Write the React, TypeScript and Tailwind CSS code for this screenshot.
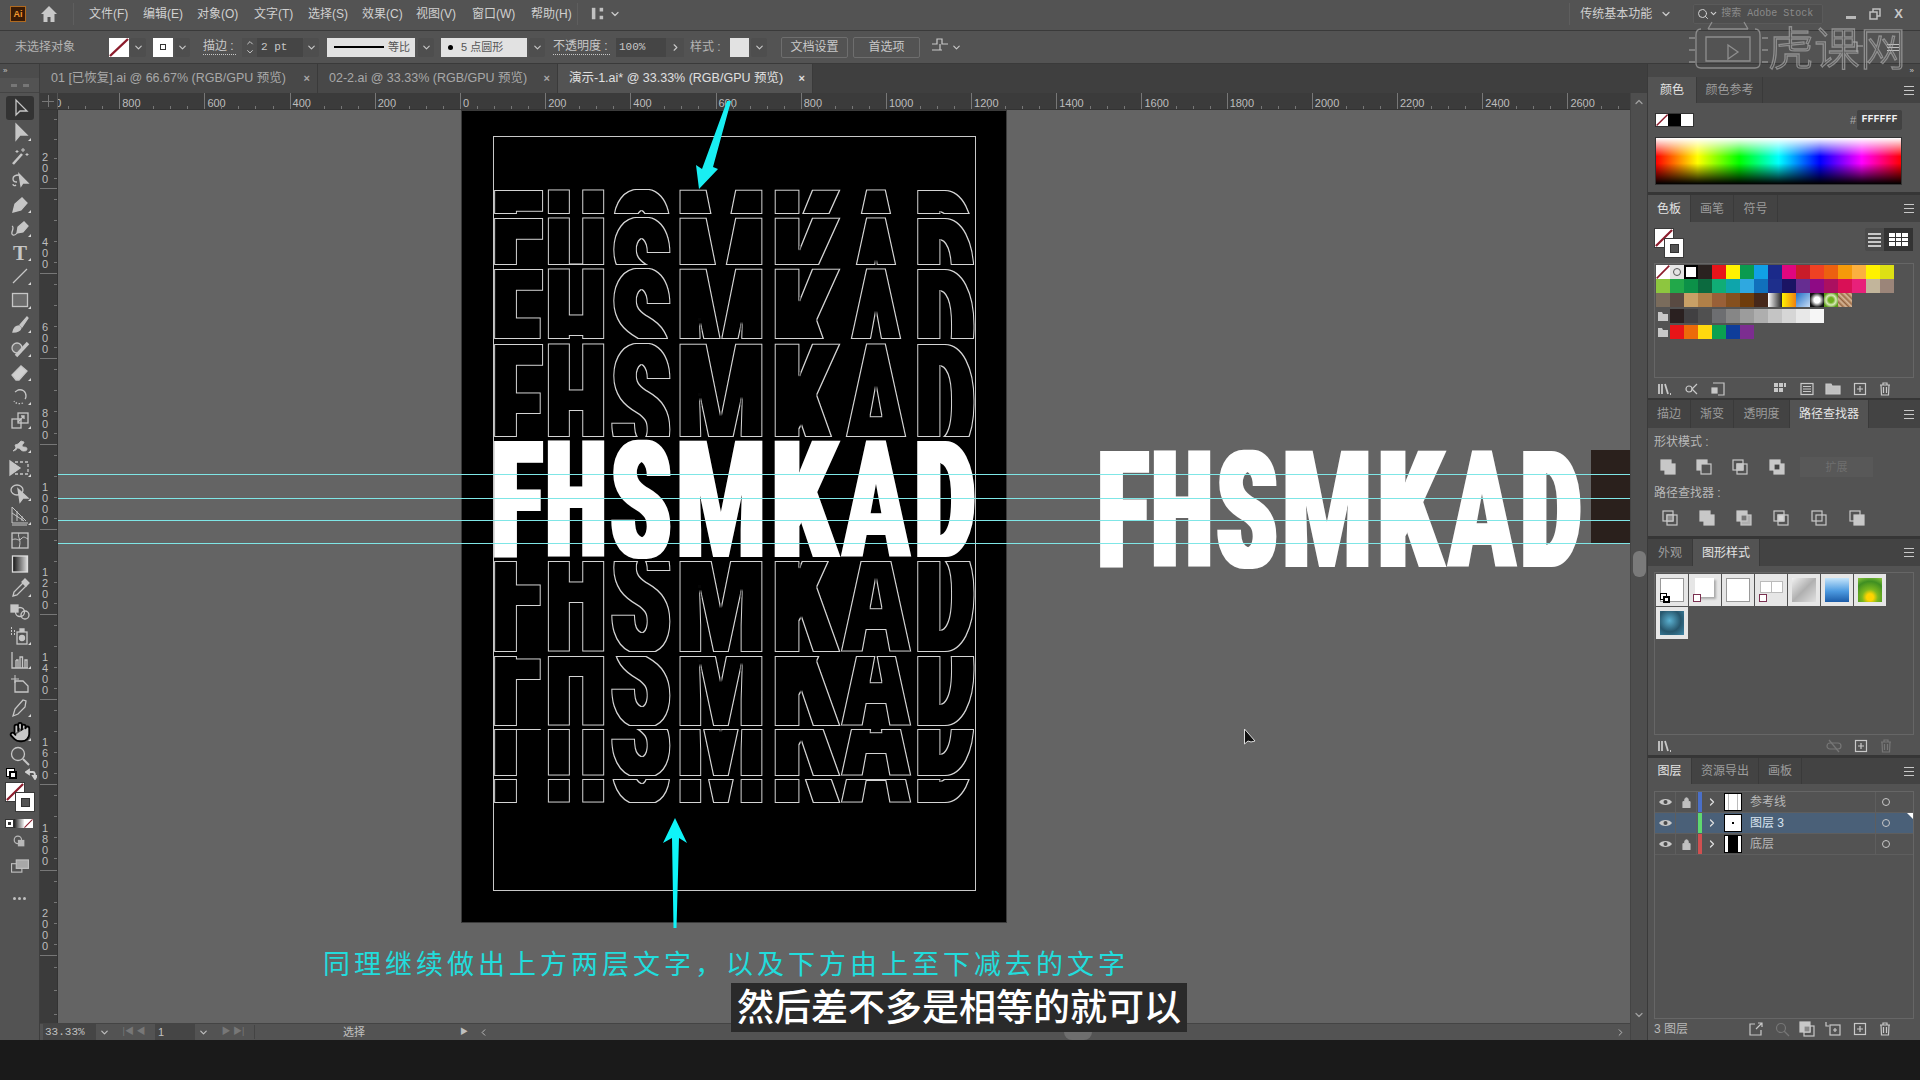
import React from 'react';
import { ChevronDown, ChevronUp, ChevronRight, ChevronLeft, Hand, Search, LayoutPanelLeft } from 'lucide-react';

// tiny helpers
const Chev = ({ className = '' }: { className?: string }) => (
  <div className={`h-[19px] flex items-center justify-center bg-[#4e4e4e] rounded-[2px] ${className}`}>
    <ChevronDown size={11} strokeWidth={2.5} className="text-[#c8c8c8]" />
  </div>
);

const Diagonal = () => (
  <svg viewBox="0 0 20 20" className="absolute inset-0 w-full h-full" preserveAspectRatio="none">
    <line x1="1" y1="19" x2="19" y2="1" stroke="#8c1c2c" strokeWidth="2.4" />
  </svg>
);

// big fill / stroke pair, used by the toolbar and the swatches panel
const FillStroke = ({ className = '' }: { className?: string }) => (
  <div className={`relative w-[30px] h-[30px] ${className}`}>
    <div className="absolute left-0 top-0 w-[20px] h-[20px] bg-white border border-[#3a3a3a]">
      <Diagonal />
    </div>
    <div className="absolute left-[10px] top-[10px] w-[20px] h-[20px] bg-white border border-[#3a3a3a] flex items-center justify-center">
      <div className="w-[9px] h-[9px] bg-[#535353] border border-[#333]" />
    </div>
  </div>
);

const Marker = () => <polygon points="20,21 23,21 23,18" fill="#d8d8d8" stroke="none" />;

const tools: { el: React.ReactNode; mark?: boolean; active?: boolean }[] = [
  { active: true, el: <path d="M8 4v15l4-4h7z" fill="none" /> },
  { mark: true, el: <path d="M8 4v16l4-5h7z" fill="#c6c6c6" /> },
  { mark: false, el: <><path d="M5 20l9-10" strokeWidth="2.6" /><path d="M15 4v4M13 6h4M19 9v3M17.500 10.500h3M9 6v3M7.500 7.500h3" strokeWidth="1" /></> },
  { el: <><path d="M11 7c-4 0-6 2-6 4 0 2 2 3 4 3M5 16c0 2 2 2 3 1" fill="none" /><path d="M11 6l9 9-5 0-2 3z" fill="#c6c6c6" /></> },
  { mark: true, el: <path d="M5 20l2-8 7-6 5 5-6 7z" fill="#c6c6c6" /> },
  { mark: true, el: <><path d="M9 17l1-6 6-5 4 4-5 6z" fill="#c6c6c6" /><path d="M9 17c-2 3-6 3-5-1 1-3 2-5 0-6" fill="none" /></> },
  { mark: true, el: <text x="12" y="20" textAnchor="middle" fontSize="21" fontWeight="700" fontFamily="'Liberation Serif', serif" fill="#c6c6c6" stroke="none">T</text> },
  { mark: true, el: <path d="M5 19L19 5" /> },
  { mark: true, el: <rect x="4.500" y="5.500" width="15" height="13" fill="#6c6c6c" /> },
  { mark: true, el: <><path d="M12 13l7-8 1 1-6 9z" fill="#c6c6c6" /><path d="M5 20c1-4 3-6 6-6l2 2c-1 3-4 4-8 4z" fill="#c6c6c6" /></> },
  { mark: true, el: <><circle cx="9" cy="12" r="5" fill="#6c6c6c" /><path d="M8 20L20 7" strokeWidth="3.4" /></> },
  { mark: true, el: <path d="M4 15l9-9 6 5-8 9H8z" fill="#d0d0d0" /> },
  { mark: true, el: <><path d="M7 8l3-2c4-1 8 1 8 6 0 1 0 2-1 3" fill="none" /><path d="M15 19c-3 1-7 1-9-2" strokeDasharray="1.500 1.500" fill="none" /></> },
  { mark: true, el: <><rect x="4" y="11" width="9" height="9" fill="none" /><rect x="10" y="5" width="10" height="10" fill="none" /><path d="M10 14l6-6M13 8h3v3" /></> },
  { mark: true, el: <path d="M5 19c5-1 3-3 5-3s3 3 5 3 4 0 4-2c0-3-4-1-5-3 0-2 2-2 2-4l-3-1-3 3-3 1 1 3z" fill="#c6c6c6" strokeWidth="0.800" /> },
  { mark: true, el: <><path d="M2 5l10 7-10 7z" fill="#c6c6c6" /><rect x="7" y="6" width="13" height="12" fill="none" strokeDasharray="3 2" /></> },
  { mark: true, el: <><ellipse cx="9" cy="10" rx="6" ry="5" fill="none" /><path d="M10 9l10 9h-5l-3 4z" fill="#c6c6c6" /></> },
  { mark: true, el: <><path d="M4 3v16h16M4 3l14 14M4 9l12 8M9 7v10M14 12v5" fill="none" strokeWidth="1" /><path d="M4 21h15" strokeWidth="1" /></> },
  { el: <><rect x="4" y="5" width="16" height="15" fill="none" /><path d="M4 12c5-3 6 2 9-1s3-2 7 0M11 5c-2 5 3 6 0 15" fill="none" strokeWidth="1" /></> },
  { el: <><defs><linearGradient id="toolGrad"><stop offset="0" stopColor="#111" /><stop offset="1" stopColor="#ddd" /></linearGradient></defs><rect x="4.500" y="4" width="15" height="16" fill="url(#toolGrad)" stroke="#ddd" /></> },
  { mark: true, el: <><path d="M5 20l1-4 9-9 3 3-9 9z" fill="none" /><path d="M14 6l3-3 4 4-3 3z" fill="#c6c6c6" /></> },
  { el: <><rect x="3" y="5" width="7" height="7" fill="#c6c6c6" /><circle cx="12" cy="12" r="4.500" fill="none" /><circle cx="17" cy="15" r="4" fill="none" /></> },
  { mark: true, el: <><rect x="9" y="8" width="10" height="12" fill="none" /><circle cx="14" cy="14" r="2.500" fill="#c6c6c6" /><path d="M12 8V5h4v3" fill="#c6c6c6" /><path d="M3 7h1M6 7h1M3 10h1M6 10h1M3 4h1" strokeWidth="1.800" /></> },
  { mark: true, el: <path d="M4 4v16h16M8 20v-8M8 12h2v8M12 20V9h2.500v11M17 20v-8h2v8" fill="none" /> },
  { el: <><path d="M7 3v8M3 7h8" strokeWidth="1" /><path d="M7 9h8l5 5v6H7z" fill="none" /></> },
  { mark: true, el: <path d="M5 20l2-7 8-9 3 1-1 6-7 7z" fill="none" /> },
  { mark: true, el: <g transform="translate(1 1) scale(0.92)"><Hand size={24} x={0} y={0} fill="#c6c6c6" /></g> },
  { el: <><circle cx="10" cy="10" r="6.500" fill="none" /><path d="M15 15l6 6" strokeWidth="2" /></> },
];

const Toolbar = () => (
  <div className="w-[40px] shrink-0 bg-[#535353] border-r border-[#3e3e3e] flex flex-col">
    <div className="h-[14px] pl-[3px] text-[#c8c8c8] text-[8px] leading-[14px] bg-[#4c4c4c]">»</div>
    <div className="h-[15px] flex items-center justify-center border-b border-[#444]">
      <div className="w-[18px] h-[3px] border-x-[6px] border-[#777]" />
    </div>
    <div className="flex flex-col items-center pt-[3px]">
      {tools.map((t, i) => (
        <div key={i} className={`w-[28px] h-[24px] flex items-center justify-center rounded-[3px] ${t.active ? 'bg-[#333333]' : ''}`}>
          <svg viewBox="0 0 24 24" width="24" height="24" stroke="#c6c6c6" strokeWidth="1.300" fill="none">
            {t.el}
            {t.mark && <Marker />}
          </svg>
        </div>
      ))}
    </div>
    <div className="relative h-[70px] pt-[4px]">
      <div className="absolute left-[6px] top-[0px] w-[9px] h-[9px] bg-white border border-black" />
      <div className="absolute left-[9px] top-[3px] w-[8px] h-[8px] bg-white border-[2px] border-black" />
      <svg viewBox="0 0 12 12" className="absolute left-[25px] top-[0px] w-[12px] h-[12px]" stroke="#d0d0d0" strokeWidth="1.800" fill="none">
        <path d="M2 4h6c2 0 2 2 2 6M1 4l3-2v4zM10 11l-2-3h4z" />
      </svg>
    </div>
    <div className="pl-[5px] -mt-[56px]">
      <FillStroke />
      <div className="flex mt-[7px] h-[9px] w-[29px]">
        <div className="w-[9px] bg-white border border-[#333] flex items-center justify-center"><div className="w-[3px] h-[3px] bg-[#333]" /></div>
        <div className="w-[10px] bg-[linear-gradient(to_right,#222,#eee)]" />
        <div className="relative w-[9px] bg-white"><Diagonal /></div>
      </div>
      <svg viewBox="0 0 16 16" className="w-[13px] h-[13px] mt-[7px] ml-[8px]" fill="#b8b8b8">
        <circle cx="6" cy="6" r="4.500" fill="none" stroke="#b8b8b8" strokeWidth="1.500" />
        <rect x="6" y="6" width="8" height="8" />
      </svg>
      <svg viewBox="0 0 20 16" className="w-[20px] h-[15px] mt-[11px] ml-[5px]" fill="none" stroke="#c0c0c0" strokeWidth="1.200">
        <rect x="1" y="5" width="11" height="9" />
        <rect x="6" y="1" width="13" height="9" fill="#a8a8a8" />
      </svg>
      <div className="mt-[23px] ml-[8px] flex gap-[2px]">
        <div className="w-[3px] h-[3px] rounded-full bg-[#c0c0c0]" />
        <div className="w-[3px] h-[3px] rounded-full bg-[#c0c0c0]" />
        <div className="w-[3px] h-[3px] rounded-full bg-[#c0c0c0]" />
      </div>
    </div>
  </div>
);

const TitleBar = () => {
  const menus = [
    ['文件(F)', 'w-[54px]'], ['编辑(E)', 'w-[54px]'], ['对象(O)', 'w-[57px]'], ['文字(T)', 'w-[54px]'], ['选择(S)', 'w-[54px]'],
    ['效果(C)', 'w-[54px]'], ['视图(V)', 'w-[56px]'], ['窗口(W)', 'w-[59px]'], ['帮助(H)', 'w-[46px]'],
  ];
  return (
    <div className="h-[31px] shrink-0 flex items-center bg-[#535353] border-b border-[#3a3a3a] pb-[3px] text-[12px] text-[#d0d0d0]">
      <div className="ml-[10px] w-[16px] h-[16px] bg-[#3a1b05] border border-[#b06a20] text-[#f09a30] text-[9px] leading-[14px] text-center font-bold">Ai</div>
      <svg viewBox="0 0 18 18" className="ml-[14px] w-[18px] h-[18px]" fill="#c8c8c8"><path d="M9 1L1 9h2.500v8h4v-5h3v5h4V9H17z" /></svg>
      <div className="ml-[15px] mr-[15px] w-px h-[22px] bg-[#5e5e5e]" />
      {menus.map(([m, w]) => <div key={m} className={w}>{m}</div>)}
      <div className="w-px h-[22px] bg-[#5e5e5e]" />
      <LayoutPanelLeft size={17} fill="#c0c0c0" className="ml-[11px] text-[#535353]" />
      <ChevronDown size={12} strokeWidth={2.5} className="ml-[3px] text-[#c8c8c8]" />
      <div className="ml-auto w-px h-[22px] bg-[#5e5e5e]" />
      <div className="ml-[10px] w-[80px]">传统基本功能</div>
      <ChevronDown size={12} strokeWidth={2.5} className="text-[#c8c8c8]" />
      <div className="ml-[21px] w-[130px] h-[20px] flex items-center bg-[#4e4e4e] border border-[#5a5a5a] rounded-[2px] pl-[3px] text-[10px] text-[#8a8a8a] font-['Liberation_Mono','Noto_Sans_CJK_SC',monospace]">
        <Search size={12} className="text-[#d0d0d0]" />
        <ChevronDown size={9} strokeWidth={3} className="text-[#d0d0d0] mr-[3px]" />
        搜索 Adobe Stock
      </div>
      <div className="ml-[23px] w-[10px] h-[3px] mt-[7px] bg-[#b8b8b8]" />
      <svg viewBox="0 0 12 12" className="ml-[13px] w-[12px] h-[12px]" fill="none" stroke="#c0c0c0" strokeWidth="1.500"><rect x="1" y="4" width="7" height="7" /><path d="M4 4V1h7v7H8" /></svg>
      <div className="ml-[13px] mr-[17px] text-[13px] font-bold text-[#c8c8c8] leading-none">X</div>
    </div>
  );
};

const ControlBar = () => (
  <div className="h-[33px] shrink-0 flex items-center bg-[#535353] border-b border-[#3a3a3a] text-[12px] text-[#c8c8c8]">
    <div className="ml-[15px] w-[94px] text-[#b4b4b4]">未选择对象</div>
    <div className="relative w-[20px] h-[19px] bg-white"><Diagonal /></div>
    <Chev className="ml-[1px] w-[16px]" />
    <div className="ml-[7px] w-[20px] h-[19px] bg-white flex items-center justify-center"><div className="w-[6px] h-[6px] border border-[#333]" /></div>
    <Chev className="ml-[2px] w-[15px]" />
    <div className="ml-[13px] w-[33px] leading-[15px] border-b border-dotted border-[#c8c8c8]">描边 :</div>
    <div className="ml-[6px] w-[15px] h-[19px] flex flex-col items-center justify-center bg-[#4e4e4e]">
      <ChevronUp size={10} strokeWidth={2.5} />
      <ChevronDown size={10} strokeWidth={2.5} />
    </div>
    <div className="w-[46px] h-[19px] leading-[19px] pl-[4px] bg-[#454545] text-[11px] font-['Liberation_Mono',monospace]">2 pt</div>
    <Chev className="w-[16px]" />
    <div className="ml-[8px] w-[88px] h-[19px] flex items-center bg-[#e2e2e2] text-[#555] text-[11px]">
      <div className="ml-[7px] w-[50px] h-[2px] bg-black" />
      <div className="ml-[4px]">等比</div>
    </div>
    <Chev className="ml-[3px] w-[16px]" />
    <div className="ml-[7px] w-[86px] h-[19px] flex items-center bg-[#e2e2e2] text-[#555] text-[11px]">
      <div className="ml-[7px] w-[5px] h-[5px] rounded-full bg-black" />
      <div className="ml-[8px]">5 点圆形</div>
    </div>
    <Chev className="ml-[2px] w-[16px]" />
    <div className="ml-[8px] w-[57px] leading-[15px] border-b border-dotted border-[#c8c8c8]">不透明度 :</div>
    <div className="ml-[6px] w-[50px] h-[19px] leading-[19px] pl-[3px] bg-[#454545] text-[11px] font-['Liberation_Mono',monospace]">100%</div>
    <div className="w-[18px] h-[19px] flex items-center justify-center bg-[#4e4e4e]"><ChevronRight size={11} strokeWidth={2.5} /></div>
    <div className="ml-[6px] w-[33px] text-[#b4b4b4]">样式 :</div>
    <div className="ml-[7px] w-[19px] h-[19px] bg-[#e2e2e2]" />
    <Chev className="ml-[2px] w-[16px]" />
    <div className="ml-[14px] w-[67px] h-[21px] leading-[19px] text-center border border-[#6e6e6e] rounded-[2px]">文档设置</div>
    <div className="ml-[5px] w-[67px] h-[21px] leading-[19px] text-center border border-[#6e6e6e] rounded-[2px]">首选项</div>
    <svg viewBox="0 0 18 18" className="ml-[11px] w-[18px] h-[18px]" fill="none" stroke="#c8c8c8" strokeWidth="1.200"><path d="M1 6h5V1h5v5h6M9 6v6M1 12h10" /></svg>
    <ChevronDown size={11} strokeWidth={2.5} className="ml-[2px]" />
    <svg viewBox="0 0 14 14" className="ml-[889px] w-[14px] h-[14px]" fill="none" stroke="#b0b0b0" strokeWidth="1.200"><path d="M2 2h4v10M6 6h6" /></svg>
    <div className="ml-[22px] flex flex-col gap-[2px]">
      <div className="w-[12px] h-px bg-[#c0c0c0]" /><div className="w-[12px] h-px bg-[#c0c0c0]" /><div className="w-[12px] h-px bg-[#c0c0c0]" />
    </div>
  </div>
);

const DocTabs = () => {
  const docs = [
    { name: '01 [已恢复].ai @ 66.67% (RGB/GPU 预览)', w: 'w-[278px]' },
    { name: '02-2.ai @ 33.33% (RGB/GPU 预览)', w: 'w-[240px]' },
    { name: '演示-1.ai* @ 33.33% (RGB/GPU 预览)', w: 'w-[255px]', on: true },
  ];
  return (
    <div className="h-[29px] shrink-0 flex bg-[#3f3f3f] text-[12.5px]">
      {docs.map(d => (
        <div key={d.name} className={`${d.w} flex items-center justify-between pl-[11px] pr-[7px] border-r border-[#3a3a3a] ${d.on ? 'bg-[#535353] text-[#e0e0e0]' : 'bg-[#484848] text-[#a8a8a8]'}`}>
          <span>{d.name}</span>
          <span className="text-[11px] font-bold">×</span>
        </div>
      ))}
    </div>
  );
};

const hLabels = [1000, 800, 600, 400, 200, 0, 200, 400, 600, 800, 1000, 1200, 1400, 1600, 1800, 2000, 2200, 2400, 2600];
const vLabels = ['200', '400', '600', '800', '1000', '1200', '1400', '1600', '1800', '2000'];

const HRuler = () => (
  <div className="h-[17px] shrink-0 flex bg-[#3b3b3b] border-b border-[#333] text-[11px] text-[#bdbdbd]">
    <div className="w-[18px] shrink-0 relative border-r border-[#555]">
      <div className="absolute left-[2px] top-[8px] w-[12px] h-px bg-[#777]" />
      <div className="absolute left-[8px] top-[2px] w-px h-[12px] bg-[#777]" />
    </div>
    <div className="flex-1 overflow-hidden flex">
      <div className="flex -ml-[24px] shrink-0">
        {hLabels.map((l, i) => (
          <div key={i} className="relative w-[85.2px] h-[16px] border-l border-[#777] shrink-0">
            <span className="pl-[2px] leading-[20px] block">{l}</span>
            <div className="absolute bottom-0 left-0 right-0 flex justify-around px-[8px]">
              {[0, 1, 2, 3].map(k => <div key={k} className="w-px h-[3px] bg-[#777]" />)}
            </div>
          </div>
        ))}
      </div>
    </div>
  </div>
);

const VRuler = () => (
  <div className="w-[18px] shrink-0 bg-[#3b3b3b] border-r border-[#333] overflow-hidden text-[11px] leading-[11px] text-[#bdbdbd]">
    {vLabels.map((l, i) => (
      <div key={l} className={`relative border-b border-[#777] flex flex-col justify-end pb-[3px] pl-[2px] ${i === 0 ? 'h-[79px]' : 'h-[85.2px]'}`}>
        {l.split('').map((c, k) => <span key={k}>{c}</span>)}
        <div className="absolute right-0 top-0 bottom-0 flex flex-col justify-around">
          {[0, 1, 2, 3].map(k => <div key={k} className="w-[3px] h-px bg-[#777]" />)}
        </div>
      </div>
    ))}
    <div className="h-[70px] relative flex flex-col justify-around items-end">
      {[0, 1, 2].map(k => <div key={k} className="w-[3px] h-px bg-[#777]" />)}
    </div>
  </div>
);

const StatusBar = () => (
  <div className="h-[17px] shrink-0 flex items-center bg-[#535353] border-t border-[#444] text-[11px] text-[#c0c0c0]">
    <div className="ml-[3px] w-[53px] h-[16px] leading-[16px] pl-[2px] bg-[#454545] font-['Liberation_Mono',monospace]">33.33%</div>
    <div className="w-[17px] flex justify-center"><ChevronDown size={11} strokeWidth={2.5} /></div>
    <div className="w-[42px] text-[#777] text-[9px] text-center">|◀ ◀</div>
    <div className="w-[40px] h-[16px] leading-[16px] pl-[3px] bg-[#454545]">1</div>
    <div className="w-[17px] flex justify-center"><ChevronDown size={11} strokeWidth={2.5} /></div>
    <div className="w-[43px] text-[#777] text-[9px] text-center border-r border-[#444]">▶ ▶|</div>
    <div className="ml-[88px] w-[117px]">选择</div>
    <div className="text-[8px] w-[18px]">▶</div>
    <ChevronLeft size={11} />
    <div className="relative flex-1 h-[16px] ml-[3px]">
      <div className="absolute left-[572px] top-[5px] w-[28px] h-[11px] rounded-b-[8px] bg-[#6e6e6e]" />
    </div>
    <ChevronRight size={11} className="mr-[4px]" />
  </div>
);

const ScrollBar = () => (
  <div className="w-[17px] shrink-0 flex flex-col items-center bg-[#4e4e4e] border-l border-[#444] text-[#a0a0a0]">
    <ChevronUp size={12} strokeWidth={2.5} className="mt-[3px]" />
    <div className="mt-[443px] w-[13px] h-[26px] rounded-[6px] bg-[#7a7a7a]" />
    <ChevronDown size={12} strokeWidth={2.5} className="mt-[432px]" />
  </div>
);

const Burger = () => (
  <div className="ml-auto mr-[6px] self-center flex flex-col gap-[3px]">
    <div className="w-[10px] h-px bg-[#c8c8c8]" /><div className="w-[10px] h-px bg-[#c8c8c8]" /><div className="w-[10px] h-px bg-[#c8c8c8]" />
  </div>
);

const PanelTabs = ({ tabs, h }: { tabs: { t: string; w: string; on?: boolean }[]; h: string }) => (
  <div className={`${h} shrink-0 flex bg-[#434343] text-[12px]`}>
    {tabs.map(t => (
      <div key={t.t} className={`${t.w} flex items-center justify-center border-r border-[#3a3a3a] ${t.on ? 'bg-[#535353] text-[#e4e4e4]' : 'text-[#9c9c9c]'}`}>{t.t}</div>
    ))}
    <Burger />
  </div>
);

const Sep = ({ h }: { h: string }) => <div className={`${h} shrink-0 bg-[#363636]`} />;

// panel footer glyphs
const g = { stroke: '#c8c8c8', fill: 'none', strokeWidth: 1.2 };
const Ico = ({ d, className = '', dim }: { d: React.ReactNode; className?: string; dim?: boolean }) => (
  <svg viewBox="0 0 16 16" {...g} className={`w-[16px] h-[16px] shrink-0 ${dim ? 'opacity-30' : ''} ${className}`}>{d}</svg>
);
const Lib = <path d="M2 3v10M5 3v10M8 3l3 10M13 13h1" strokeWidth="1.800" />;
const Plus = <><rect x="2.500" y="2.500" width="11" height="11" /><path d="M8 5v6M5 8h6" /></>;
const Trash = <><path d="M3 4h10M6 4V2h4v2M4 4l.5 10h7L12 4M6.500 6v6M9.500 6v6" /></>;
const Folder = <path d="M1 3h5l1 2h8v8H1z" fill="#c0c0c0" />;
const ListI = <><rect x="2" y="2.500" width="12" height="11" /><path d="M4 5.500h8M4 8h8M4 10.500h8" /></>;

const pfShape = (back: string, front: string, mid?: string) => (
  <>
    <rect x="1" y="1" width="10" height="10" fill={back} stroke="#c8c8c8" />
    <rect x="5" y="5" width="10" height="10" fill={front} stroke="#c8c8c8" />
    {mid && <rect x="5" y="5" width="6" height="6" fill={mid} stroke="#c8c8c8" />}
  </>
);

const rows: string[][] = [
  ['none', 'reg', 'sel', '#2a2220', '#e8141a', '#fff200', '#0a9a4f', '#11a0e6', '#1b2a8a', '#e0067f', '#c91c2a', '#ef4123', '#ec6010', '#f59a0a', '#fbb040', '#fff200', '#dde014'],
  ['#8dc63f', '#22a84a', '#0c9148', '#0c6a3f', '#10ad76', '#0ea5ab', '#2fa8e0', '#1170bc', '#1e2f8c', '#1b1464', '#662d91', '#8e0a85', '#ab1060', '#d91056', '#e8207a', '#c2b59b', '#9b8579'],
  ['#7a6c5c', '#594a42', '#c8a066', '#b08048', '#996038', '#85501f', '#6f3d0c', '#46281a', 'g1', 'g2', 'g3', 'g4', 'g5', 'g6'],
];
const grays = ['#2a2020', '#414042', '#505050', '#6d6e71', '#868686', '#9c9c9c', '#aeaeae', '#c4c4c4', '#d6d6d6', '#e8e8e8', '#f6f6f6'];
const brights = ['#e81418', '#ec6a0a', '#ffd90f', '#0aa050', '#0f3d9a', '#7c2d90'];

const Swatch = ({ c }: { c: string }) => {
  if (c === 'none') return <div className="relative w-[14px] h-[14px] bg-white"><Diagonal /></div>;
  if (c === 'reg') return <div className="w-[14px] h-[14px] bg-[#e4e4e4] flex items-center justify-center"><div className="w-[8px] h-[8px] rounded-full border border-[#555]" /></div>;
  if (c === 'sel') return <div className="w-[14px] h-[14px] bg-white border-[2px] border-black" />;
  if (c === 'g1') return <div className="w-[14px] h-[14px] bg-[linear-gradient(to_right,#fff,#222)]" />;
  if (c === 'g2') return <div className="w-[14px] h-[14px] bg-[linear-gradient(to_right,#fff200,#f08010)]" />;
  if (c === 'g3') return <div className="w-[14px] h-[14px] bg-[linear-gradient(135deg,#2070c8,#c8dcf4)]" />;
  if (c === 'g4') return <div className="w-[14px] h-[14px] bg-[radial-gradient(circle,#fff_30%,#111_75%)]" />;
  if (c === 'g5') return <div className="w-[14px] h-[14px] bg-[radial-gradient(circle,#6fb020_25%,#d8e8b8_50%,#5a9a18_80%)]" />;
  if (c === 'g6') return <div className="w-[14px] h-[14px] bg-[repeating-linear-gradient(45deg,#a87850_0,#d8b898_2px,#8a5a38_4px)]" />;
  return <div className="w-[14px] h-[14px]" style={{ background: c }} />;
};

const Folderlet = () => (
  <svg viewBox="0 0 14 14" className="w-[14px] h-[14px]" fill="#c8c8c8"><path d="M2 3h4l1 2h5v7H2z" /></svg>
);

const ColorPanel = () => (
  <>
    <PanelTabs h="h-[26px]" tabs={[{ t: '颜色', w: 'w-[49px]', on: true }, { t: '颜色参考', w: 'w-[66px]' }]} />
    <div className="h-[89px] shrink-0 px-[7px] pt-[7px] bg-[#535353]">
      <div className="h-[20px] flex items-center justify-between pr-[11px]">
        <div className="flex h-[14px] w-[39px] border border-[#333]">
          <div className="relative w-[13px] bg-white"><Diagonal /></div>
          <div className="w-[13px] bg-black" />
          <div className="w-[13px] bg-white" />
        </div>
        <div className="flex items-center">
          <span className="mr-[1px] w-[6px] text-[11px] text-[#aaa]">#</span>
          <div className="w-[45px] h-[20px] leading-[20px] text-center rounded-[2px] bg-[#424242] text-[#f0f0f0] text-[10px] font-['Liberation_Mono',monospace] font-bold">FFFFFF</div>
        </div>
      </div>
      <div className="mt-[7px] w-[247px] h-[48px] border border-[#333] bg-[linear-gradient(to_bottom,#fff_0%,transparent_40%,transparent_55%,#000_100%),linear-gradient(to_right,#f00,#ff0_17%,#0f0_34%,#0ff_50%,#00f_67%,#f0f_84%,#f00)]" />
    </div>
    <Sep h="h-[3px]" />
  </>
);

const SwatchPanel = () => (
  <>
    <PanelTabs h="h-[27px]" tabs={[{ t: '色板', w: 'w-[43px]', on: true }, { t: '画笔', w: 'w-[43px]' }, { t: '符号', w: 'w-[44px]' }]} />
    <div className="h-[176px] shrink-0 px-[6px] pt-[6px] bg-[#535353] flex flex-col">
      <div className="h-[30px] flex justify-between items-start pr-[1px]">
        <FillStroke />
        <div className="flex h-[23px] w-[48px] rounded-[2px] bg-[#4a4a4a]">
          <div className="flex-1 flex flex-col justify-center items-center gap-[2px]">
            {[0, 1, 2, 3].map(k => <div key={k} className="w-[13px] h-[2px] bg-[#c8c8c8]" />)}
          </div>
          <div className="flex-1 bg-[#333] grid grid-cols-3 gap-px p-[5px]">
            {[0, 1, 2, 3, 4, 5, 6, 7, 8].map(k => <div key={k} className="bg-white" />)}
          </div>
        </div>
      </div>
      <div className="mt-[5px] h-[115px] border border-[#666] pl-px pt-px flex flex-col">
        {rows.map((r, i) => <div key={i} className="flex h-[14px]">{r.map((c, k) => <Swatch key={k} c={c} />)}</div>)}
        <div className="flex h-[14px] mt-[2px]"><Folderlet />{grays.map(c => <Swatch key={c} c={c} />)}</div>
        <div className="flex h-[14px] mt-[2px]"><Folderlet />{brights.map(c => <Swatch key={c} c={c} />)}</div>
      </div>
      <div className="flex items-center mt-[2px] h-[16px] pt-[2px]">
        <Ico d={Lib} className="ml-[3px]" />
        <Ico className="ml-[11px]" d={<><circle cx="5" cy="8" r="3" /><path d="M8 8l5-5M8 8l5 5" /></>} />
        <Ico className="ml-[10px]" d={<><path d="M3 2h11v12H8" /><rect x="2" y="7" width="5" height="5" fill="#c8c8c8" /></>} />
        <Ico className="ml-[46px]" d={<path d="M2 2h4v4H2zM7 2h4v4H7zM2 7h4v4H2zM7 7h4v4H7zM12 2h2v4h-2z" fill="#c8c8c8" stroke="none" />} />
        <Ico className="ml-[11px]" d={ListI} />
        <Ico className="ml-[10px]" d={Folder} />
        <Ico className="ml-[11px]" d={Plus} />
        <Ico className="ml-[9px]" d={Trash} />
      </div>
    </div>
    <Sep h="h-[2px]" />
  </>
);

const PathfinderPanel = () => (
  <>
    <PanelTabs h="h-[28px]" tabs={[{ t: '描边', w: 'w-[43px]' }, { t: '渐变', w: 'w-[43px]' }, { t: '透明度', w: 'w-[56px]' }, { t: '路径查找器', w: 'w-[79px]', on: true }]} />
    <div className="h-[108px] shrink-0 pl-[6px] pt-[6px] bg-[#535353] text-[12px] text-[#b8b8b8]">
      <div className="h-[16px] leading-[16px]">形状模式 :</div>
      <div className="flex items-center mt-[7px] h-[20px]">
        <Ico className="ml-[6px]" d={pfShape('#c8c8c8', '#c8c8c8')} />
        <Ico className="ml-[20px]" d={pfShape('#c8c8c8', '#535353')} />
        <Ico className="ml-[20px]" d={pfShape('none', 'none', '#c8c8c8')} />
        <Ico className="ml-[21px]" d={pfShape('#c8c8c8', '#c8c8c8', '#444')} />
        <div className="ml-[15px] w-[73px] h-[20px] leading-[20px] text-center bg-[#585858] text-[#6f6f6f] text-[11px]">扩展</div>
      </div>
      <div className="h-[16px] leading-[16px] mt-[8px]">路径查找器 :</div>
      <div className="flex items-center mt-[7px] h-[20px]">
        <Ico className="ml-[8px]" d={pfShape('none', 'none', '#8a8a8a')} />
        <Ico className="ml-[21px]" d={pfShape('#c8c8c8', '#c8c8c8')} />
        <Ico className="ml-[21px]" d={pfShape('#c8c8c8', '#b0b0b0', '#777')} />
        <Ico className="ml-[21px]" dim={false} d={pfShape('none', 'none', '#d8d8d8')} />
        <Ico className="ml-[22px]" d={pfShape('none', 'none')} />
        <Ico className="ml-[22px]" d={pfShape('#535353', '#c8c8c8')} />
      </div>
    </div>
    <Sep h="h-[3px]" />
  </>
);

const styleTiles: React.ReactNode[] = [
  <div key="a" className="relative w-[24px] h-[24px] bg-white border border-[#999]">
    <div className="absolute -left-[1px] top-[14px] w-[7px] h-[7px] bg-white border border-black" />
    <div className="absolute left-[2px] top-[17px] w-[7px] h-[7px] bg-white border-[2px] border-black" />
  </div>,
  <div key="b" className="relative w-[24px] h-[24px]">
    <div className="absolute left-[2px] top-0 w-[19px] h-[19px] bg-white shadow-[2px_2px_2px_#aaa]" />
    <div className="absolute left-0 bottom-0 w-[8px] h-[8px] bg-white border border-[#7a3050]" />
  </div>,
  <div key="c" className="w-[24px] h-[24px] bg-white border border-[#999]" />,
  <div key="d" className="relative w-[24px] h-[24px]">
    <div className="absolute left-[1px] top-[3px] w-[12px] h-[12px] bg-white border border-[#bbb]" />
    <div className="absolute left-[12px] top-[3px] w-[12px] h-[12px] bg-white border border-[#bbb]" />
    <div className="absolute left-0 bottom-0 w-[8px] h-[8px] bg-white border border-[#7a3050]" />
  </div>,
  <div key="e" className="w-[24px] h-[24px] bg-[linear-gradient(135deg,#f0f0f0,#b0b0b0_50%,#e0e0e0)]" />,
  <div key="f" className="w-[24px] h-[24px] bg-[linear-gradient(to_bottom,#c4e4fa,#4c9ae0_55%,#1c5ca8)]" />,
  <div key="g" className="w-[24px] h-[24px] bg-[radial-gradient(circle_at_50%_80%,#ffd400_15%,#7cb81e_35%,#3f8f22_70%,#8cc83c)]" />,
  <div key="h" className="w-[24px] h-[24px] bg-[radial-gradient(circle_at_40%_40%,#5ab0d0,#27566c_55%,#3f88a8)]" />,
];

const StylesPanel = () => (
  <>
    <PanelTabs h="h-[27px]" tabs={[{ t: '外观', w: 'w-[45px]' }, { t: '图形样式', w: 'w-[67px]', on: true }]} />
    <div className="h-[189px] shrink-0 px-[6px] pt-[6px] bg-[#535353] flex flex-col">
      <div className="h-[163px] border border-[#666] pl-px pt-px flex flex-wrap content-start gap-px">
        {styleTiles.map((tile, i) => (
          <div key={i} className="w-[32px] h-[32px] bg-[#e6e6e6] flex items-center justify-center">{tile}</div>
        ))}
      </div>
      <div className="flex items-center mt-[2px] h-[16px] pt-[2px]">
        <Ico d={Lib} className="ml-[3px]" />
        <Ico dim className="ml-[153px]" d={<><rect x="1" y="5" width="14" height="6" rx="3" /><path d="M3 2l10 12" /></>} />
        <Ico className="ml-[11px]" d={Plus} />
        <Ico dim className="ml-[9px]" d={Trash} />
      </div>
    </div>
    <Sep h="h-[3px]" />
  </>
);

const layers = [
  { name: '参考线', bar: 'bg-[#4a6fc8]', lock: true, thumb: <div className="h-full mx-[3px] border-x border-[#bbb]" /> },
  { name: '图层 3', bar: 'bg-[#5fd86f]', on: true, thumb: <div className="h-full flex items-center justify-center"><div className="w-[2px] h-[2px] bg-black" /></div> },
  { name: '底层', bar: 'bg-[#d05050]', lock: true, thumb: <div className="h-full mx-[3px] bg-black" /> },
];

const LayerRow = ({ l }: { l: typeof layers[number] }) => (
  <div className={`relative h-[21px] flex items-center border-b border-[#5e5e5e] ${l.on ? 'bg-[#4a6078] text-[#d8e4f0]' : 'text-[#b8b8b8]'}`}>
    <svg viewBox="0 0 16 12" className="ml-[4px] w-[13px] h-[10px]" fill="#c8c8c8"><path d="M0 6c3-5 13-5 16 0-3 5-13 5-16 0z" /><circle cx="8" cy="6" r="2.500" fill="#4a4a4a" /></svg>
    <div className="ml-[3px] w-[22px] h-full border-x border-[#5e5e5e] flex items-center justify-center">
      {l.lock && <svg viewBox="0 0 10 12" className="w-[9px] h-[11px]" fill="#c0c0c0"><path d="M1 5h8v7H1zM3 5V3c0-3 4-3 4 0v2" stroke="#c0c0c0" strokeWidth="1" /></svg>}
    </div>
    <div className={`ml-[1px] w-[4px] h-[20px] ${l.bar}`} />
    <ChevronRight size={12} strokeWidth={2.5} className="ml-[4px] text-[#e0e0e0]" />
    <div className="ml-[6px] w-[18px] h-[18px] bg-white border border-black">{l.thumb}</div>
    <div className="ml-[8px] w-[125px] text-[12px]">{l.name}</div>
    <div className="w-[36px] h-full border-l border-[#5e5e5e] flex items-center pl-[6px]">
      <div className="w-[8px] h-[8px] rounded-full border border-[#c8c8c8]" />
    </div>
    {l.on && <div className="absolute right-0 top-0 w-0 h-0 border-t-[6px] border-l-[6px] border-t-white border-l-transparent" />}
  </div>
);

const LayersPanel = () => (
  <>
    <PanelTabs h="h-[26px]" tabs={[{ t: '图层', w: 'w-[44px]', on: true }, { t: '资源导出', w: 'w-[67px]' }, { t: '画板', w: 'w-[43px]' }]} />
    <div className="flex-1 px-[6px] pt-[7px] bg-[#535353] flex flex-col">
      <div className="h-[228px] border border-[#666]">
        {layers.map(l => <LayerRow key={l.name} l={l} />)}
      </div>
      <div className="flex items-center h-[20px] text-[12px] text-[#b8b8b8]">
        <div className="w-[94px]">3 图层</div>
        <Ico d={<><path d="M7 3H2v11h11V9" /><path d="M8 8l6-6M10 2h4v4" /></>} />
        <Ico dim className="ml-[10px]" d={<><circle cx="7" cy="7" r="4.500" /><path d="M10 10l5 5" /></>} />
        <Ico className="ml-[9px]" d={pfShape('#c8c8c8', 'none', '#888')} />
        <Ico className="ml-[10px]" d={<><rect x="5" y="4" width="10" height="10" /><path d="M10 7v4M8 9h4M1 1v4h3" /></>} />
        <Ico className="ml-[11px]" d={Plus} />
        <Ico className="ml-[9px]" d={Trash} />
      </div>
    </div>
  </>
);

// the poster lettering: glyphs are fitted one by one, then a filter fattens the stems
// sideways only, which gets close to the heavy condensed face in the picture.
// M and A get the lighter filter or their inner counters close up
const glyphs: [string, number, number, string][] = [
  ['F', 0.5, 47, 'url(#heavy)'], ['H', 54.5, 57, 'url(#heavy)'], ['S', 119.5, 57, 'url(#heavy)'], ['M', 183, 90, 'url(#lighter)'],
  ['K', 280.5, 62, 'url(#heavy)'], ['A', 350, 66, 'url(#lighter)'], ['D', 423.5, 57, 'url(#heavy)'],
];

const Word = ({ fill }: { fill: string }) => (
  <>
    {glyphs.map(([ch, x, w, filter]) => (
      <text
        key={ch}
        x={x}
        y={117}
        textLength={w}
        lengthAdjust="spacingAndGlyphs"
        fontFamily="Roboto, 'Liberation Sans', sans-serif"
        fontWeight={900}
        fontSize={164}
        fill={fill}
        filter={filter}
      >
        {ch}
      </text>
    ))}
  </>
);

const topRows: [number, number][] = [[189, 25], [217, 48], [268, 71], [343, 94]];
const bottomRows: [number, number][] = [[561, 91], [656, 70], [729, 47], [779, 24]];
const guides = [474, 498, 520, 543];

const Art = () => (
  <svg viewBox="0 0 1920 1080" className="absolute inset-0 w-[1920px] h-[1080px] pointer-events-none">
    <defs>
      <filter id="heavy" filterUnits="userSpaceOnUse" x="-20" y="-20" width="530" height="160">
        <feMorphology operator="dilate" radius="3.500 0" />
      </filter>
      <filter id="lighter" filterUnits="userSpaceOnUse" x="-20" y="-20" width="530" height="160">
        <feMorphology operator="dilate" radius="2 0" />
      </filter>
      <filter id="edge" filterUnits="userSpaceOnUse" x="480" y="180" width="510" height="640">
        <feMorphology in="SourceAlpha" operator="erode" radius="1" result="inner" />
        <feComposite in="SourceGraphic" in2="inner" operator="out" />
      </filter>
      {[...topRows, ...bottomRows].map(([y, h], i) => (
        <clipPath id={`row${i}`} key={i}><rect x="480" y={y} width="510" height={h} /></clipPath>
      ))}
      <clipPath id="wordBox"><rect x="493" y="0" width="482" height="1080" /></clipPath>
    </defs>
    <rect x="493.500" y="136.500" width="482" height="754" fill="none" stroke="#c8c8c8" strokeWidth="1" />
    {topRows.map(([y], i) => (
      <g key={y} filter="url(#edge)">
        <g clipPath={`url(#row${i})`}>
          <g clipPath="url(#wordBox)"><g transform={`translate(493 ${y})`}><Word fill="#d4d4d4" /></g></g>
        </g>
      </g>
    ))}
    {bottomRows.map(([y, h], i) => (
      <g key={y} filter="url(#edge)">
        <g clipPath={`url(#row${i + 4})`}>
          <g clipPath="url(#wordBox)"><g transform={`translate(493 ${y + h - 117})`}><Word fill="#d4d4d4" /></g></g>
        </g>
      </g>
    ))}
    <g clipPath="url(#wordBox)"><g transform="translate(493 440)"><Word fill="#ffffff" /></g></g>
    <g transform="translate(1099 449.500)"><Word fill="#ffffff" /></g>
    <rect x="1591" y="450" width="39" height="93" fill="#2a201c" />
    {guides.map(y => <line key={y} x1="58" x2="1630" y1={y + 0.5} y2={y + 0.5} stroke="#7fe6e6" strokeWidth="1" />)}
    <polygon points="727,101 731,101 713,167 718,169 699,189 696,165 702,169" fill="#19eef2" />
    <polygon points="675,818 687,843 679,838 676.500,928 673.500,928 672,838 663,843" fill="#0ff4f8" />
    <path d="M1244.500 729v15l3.500-3 3 1 4-1z" fill="#111" stroke="#ddd" strokeWidth="1" />
    {/* watermark */}
    <g fill="none" stroke="#a8a8a8" strokeWidth="1.300" opacity="0.7">
      <path d="M1701 29c-4 0-5 3-5 6v28c0 3 2 5 5 5h54c3 0 5-2 5-5V35c0-3-1-6-5-6M1708 29l4-7M1748 29l-4-7M1708 29h40" />
      <path d="M1706 37h44v24h-44z" />
      <path d="M1728 45l10 7-10 7zM1689 38h6M1689 50h6M1689 62h6M1762 38h6M1762 50h6M1762 62h6" />
      <text x="1768" y="65" fontSize="46" fontFamily="'Noto Sans CJK SC', sans-serif" fontWeight={300}>虎课网</text>
    </g>
  </svg>
);

export default function App() {
  return (
    <div className="relative w-[1920px] h-[1080px] overflow-hidden flex flex-col bg-[#1a1a1a] font-['Liberation_Sans','Noto_Sans_CJK_SC',sans-serif]">
      <TitleBar />
      <ControlBar />
      <div className="h-[976px] shrink-0 flex">
        <Toolbar />
        <div className="w-[1607px] shrink-0 flex flex-col">
          <DocTabs />
          <div className="flex-1 flex min-h-0">
            <div className="flex-1 flex flex-col min-w-0">
              <HRuler />
              <div className="flex-1 flex min-h-0">
                <VRuler />
                <div className="relative flex-1 bg-[#646464]">
                  <div className="absolute left-[403px] top-0 w-[546px] h-[813px] bg-black border border-[#3a3a3a]" />
                </div>
              </div>
              <StatusBar />
            </div>
            <ScrollBar />
          </div>
        </div>
        <div className="w-[273px] shrink-0 flex flex-col bg-[#535353] border-l border-[#3a3a3a]">
          <div className="h-[13px] shrink-0 text-right pr-[6px] text-[8px] leading-[13px] text-[#c8c8c8] bg-[#474747]">»</div>
          <ColorPanel />
          <SwatchPanel />
          <PathfinderPanel />
          <StylesPanel />
          <LayersPanel />
        </div>
      </div>
      <Art />
      <div className="absolute left-[323px] top-[945px] text-[27px] leading-[40px] tracking-[4px] text-[#22dcdc] whitespace-nowrap">
        同理继续做出上方两层文字，以及下方由上至下减去的文字
      </div>
      <div className="absolute left-[731px] top-[983px] w-[456px] h-[49px] pt-[2px] flex items-center justify-center bg-[#2a2a2a] text-[37px] font-medium text-white whitespace-nowrap">
        然后差不多是相等的就可以
      </div>
    </div>
  );
}
